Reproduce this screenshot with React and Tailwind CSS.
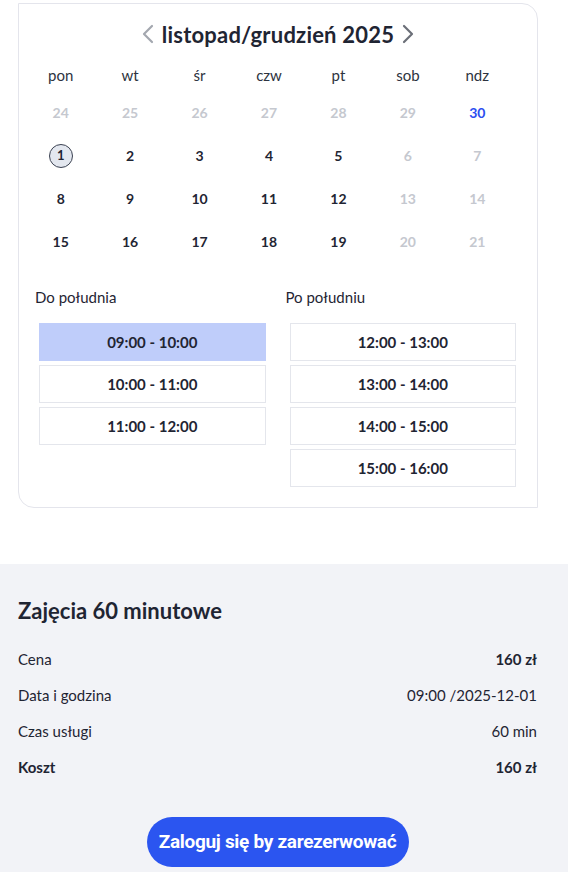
import React from 'react';

const days = ['pon', 'wt', 'śr', 'czw', 'pt', 'sob', 'ndz'];

// d: label, t: 'muted' | 'blue' | 'active' | 'sel'
const weeks = [
    [['24', 'muted'], ['25', 'muted'], ['26', 'muted'], ['27', 'muted'], ['28', 'muted'], ['29', 'muted'], ['30', 'blue']],
    [['1', 'sel'], ['2', 'active'], ['3', 'active'], ['4', 'active'], ['5', 'active'], ['6', 'muted'], ['7', 'muted']],
    [['8', 'active'], ['9', 'active'], ['10', 'active'], ['11', 'active'], ['12', 'active'], ['13', 'muted'], ['14', 'muted']],
    [['15', 'active'], ['16', 'active'], ['17', 'active'], ['18', 'active'], ['19', 'active'], ['20', 'muted'], ['21', 'muted']],
];

const morning = ['09:00 - 10:00', '10:00 - 11:00', '11:00 - 12:00'];
const afternoon = ['12:00 - 13:00', '13:00 - 14:00', '14:00 - 15:00', '15:00 - 16:00'];

const Chevron = ({ dir, className }) => (
    <svg width="14" height="20" viewBox="0 0 14 20" fill="none" className={className}>
        <path
            d={dir === 'left' ? 'M11 2 L3 10 L11 18' : 'M3 2 L11 10 L3 18'}
            stroke="currentColor"
            strokeWidth="2.2"
            strokeLinecap="round"
            strokeLinejoin="round"
        />
    </svg>
);

const DayCell = ({ d, t }) => {
    if (t === 'sel') {
        return (
            <div className="h-[43px] flex items-center justify-center">
                <span className="w-[24px] h-[24px] rounded-full bg-[#e3e7ef] border border-[#3b4252] flex items-center justify-center text-[13px] font-bold text-[#1f2533]">{d}</span>
            </div>
        );
    }
    const color = t === 'muted' ? 'text-[#c5c8cf]' : t === 'blue' ? 'text-[#2b4ef0]' : 'text-[#1f2533]';
    return (
        <div className={`h-[43px] flex items-center justify-center text-[14px] font-bold ${color}`}>{d}</div>
    );
};

const Slot = ({ label, selected }) => (
    <div className={`h-[38px] flex items-center justify-center text-[15px] font-bold text-[#1f2533] border ${selected ? 'bg-[#bfcdfa] border-[#bfcdfa]' : 'bg-white border-[#e4e6ec]'}`}>
        {label}
    </div>
);

const Row = ({ label, value, boldLabel, boldValue }) => (
    <div className="h-[36px] flex items-center justify-between text-[15px] text-[#1f2533]">
        <span className={boldLabel ? 'font-bold' : ''}>{label}</span>
        <span className={boldValue ? 'font-bold' : ''}>{value}</span>
    </div>
);

export default function App() {
    return (
        <div className="min-h-screen bg-white font-['Lato',sans-serif] text-[#1f2533]">
            {/* Calendar card */}
            <div className="pt-[3px] pl-[18px]">
                <div className="w-[520px] border border-[#e4e5ec] rounded-tr-2xl rounded-bl-2xl bg-white pt-[16px] pb-[20px]">
                    <div className="h-[28px] flex items-center justify-center gap-[7px]">
                        <Chevron dir="left" className="text-[#a3a7af]" />
                        <h2 className="text-[22px] font-bold tracking-[0.2px] text-[#1f2533]">listopad/grudzień 2025</h2>
                        <Chevron dir="right" className="text-[#6b6f78]" />
                    </div>

                    <div className="w-[486px] ml-[7px] mt-[15px]">
                        <div className="grid grid-cols-7 h-[24px] items-center text-[15px] text-[#2d3340]">
                            {days.map((d) => (
                                <div key={d} className="text-center">{d}</div>
                            ))}
                        </div>
                        <div className="mt-[4px]">
                            {weeks.map((w, i) => (
                                <div key={i} className="grid grid-cols-7">
                                    {w.map(([d, t]) => (
                                        <DayCell key={d} d={d} t={t} />
                                    ))}
                                </div>
                            ))}
                        </div>
                    </div>

                    <div className="grid grid-cols-2 gap-[16px] pl-[16px] pr-[17px] mt-[24px]">
                        <div>
                            <div className="h-[20px] flex items-center text-[15px] text-[#1f2533]">Do południa</div>
                            <div className="mt-[16px] px-[4px] flex flex-col gap-[4px]">
                                {morning.map((s, i) => (
                                    <Slot key={s} label={s} selected={i === 0} />
                                ))}
                            </div>
                        </div>
                        <div>
                            <div className="h-[20px] flex items-center text-[15px] text-[#1f2533]">Po południu</div>
                            <div className="mt-[16px] px-[4px] flex flex-col gap-[4px]">
                                {afternoon.map((s) => (
                                    <Slot key={s} label={s} />
                                ))}
                            </div>
                        </div>
                    </div>
                </div>
            </div>

            {/* Summary */}
            <div className="mt-[56px] bg-[#f2f3f7] pt-[32px] pb-[8px]">
                <div className="w-[519px] ml-[18px]">
                    <h3 className="h-[28px] flex items-center text-[22px] font-bold text-[#1f2533]">Zajęcia 60 minutowe</h3>
                    <div className="mt-[17px]">
                        <Row label="Cena" value="160 zł" boldValue />
                        <Row label="Data i godzina" value="09:00 /2025-12-01" />
                        <Row label="Czas usługi" value="60 min" />
                        <Row label="Koszt" value="160 zł" boldLabel boldValue />
                    </div>
                    <div className="mt-[32px] flex justify-center">
                        <button className="w-[262px] h-[50px] rounded-full bg-[#2b55f0] text-white text-[19px] font-bold font-['Roboto',sans-serif] tracking-[-0.3px]">
                            Zaloguj się by zarezerwować
                        </button>
                    </div>
                </div>
            </div>
        </div>
    );
}
